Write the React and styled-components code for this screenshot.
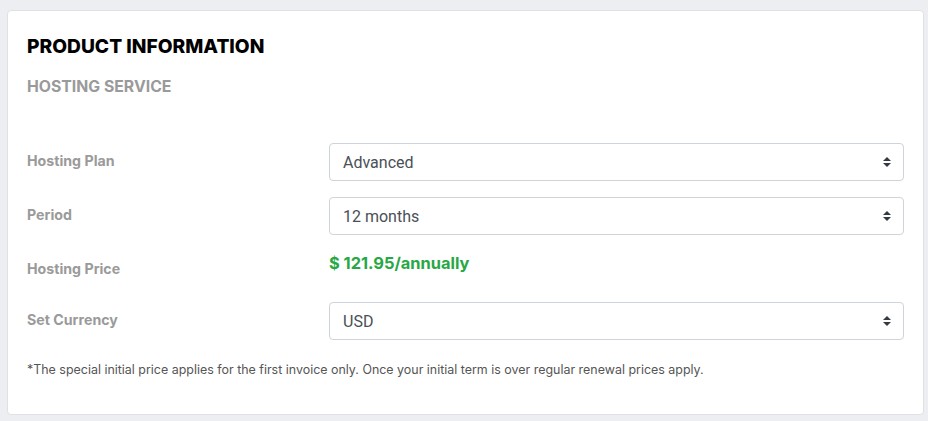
import React from "react";
import styled, { createGlobalStyle } from "styled-components";

const Global = createGlobalStyle`
  html, body { margin: 0; padding: 0; background: #eceef1; }
  body { font-family: "Inter", "Noto Sans", sans-serif; }
  * { box-sizing: border-box; }
`;

const Page = styled.div`
  padding: 10px 4px 6px 7px;
  width: 928px;
  height: 421px;
`;

const Card = styled.section`
  background: #fff;
  border: 1px solid #dfe1e5;
  border-radius: 4px;
  padding: 24px 19px 0 19px;
  height: 405px;
`;

const Title = styled.h2`
  margin: 0;
  font-family: "Inter", sans-serif;
  font-weight: 800;
  font-size: 19.2px;
  line-height: 22px;
  color: #000;
  letter-spacing: 0;
`;

const Subtitle = styled.h3`
  margin: 20px 0 0;
  font-family: "Inter", sans-serif;
  font-weight: 700;
  font-size: 15.8px;
  line-height: 20px;
  color: #9a9a9a;
`;

const Form = styled.div`
  margin-top: 46px;
  display: flex;
  flex-direction: column;
  gap: 16px;
`;

const Row = styled.div`
  display: grid;
  grid-template-columns: 302px 1fr;
  height: ${(p) => p.$h || 38}px;
`;

const Label = styled.div`
  font-family: "Inter", sans-serif;
  font-weight: 700;
  font-size: 14.2px;
  color: #9a9a9a;
  line-height: 20px;
  padding-top: ${(p) => p.$top}px;
`;

const Select = styled.div`
  position: relative;
  height: 38px;
  border: 1px solid #ced4da;
  border-radius: 4px;
  display: flex;
  align-items: center;
  padding: 0 13px;
  font-family: "Roboto", "Liberation Sans", sans-serif;
  font-size: 16px;
  color: #495057;
`;

const Arrows = styled.svg`
  position: absolute;
  right: 12px;
  top: 50%;
  transform: translateY(-50%);
`;

const Price = styled.div`
  font-family: "Inter", sans-serif;
  font-weight: 700;
  font-size: 16.4px;
  color: #28a745;
  line-height: 20px;
  padding-top: 2px;
`;

const Note = styled.p`
  margin: 21px 0 0;
  font-family: "Inter", sans-serif;
  font-size: 12.45px;
  color: #555;
  line-height: 18px;
`;

const SelectBox = ({ value }) => (
  <Select>
    {value}
    <Arrows width="8" height="12" viewBox="0 0 8 12">
      <path d="M4 1 L8 5 L0 5 Z M0 7 L8 7 L4 11 Z" fill="#343a40" />
    </Arrows>
  </Select>
);

export default function App() {
  return (
    <>
      <Global />
      <Page>
        <Card>
          <Title>PRODUCT INFORMATION</Title>
          <Subtitle>HOSTING SERVICE</Subtitle>
          <Form>
            <Row>
              <Label $top={8}>Hosting Plan</Label>
              <SelectBox value="Advanced" />
            </Row>
            <Row>
              <Label $top={8}>Period</Label>
              <SelectBox value="12 months" />
            </Row>
            <Row $h={35}>
              <Label $top={8}>Hosting Price</Label>
              <Price>$ 121.95/annually</Price>
            </Row>
            <Row>
              <Label $top={8}>Set Currency</Label>
              <SelectBox value="USD" />
            </Row>
          </Form>
          <Note>
            *The special initial price applies for the first invoice only. Once your initial term is over regular renewal prices apply.
          </Note>
        </Card>
      </Page>
    </>
  );
}
